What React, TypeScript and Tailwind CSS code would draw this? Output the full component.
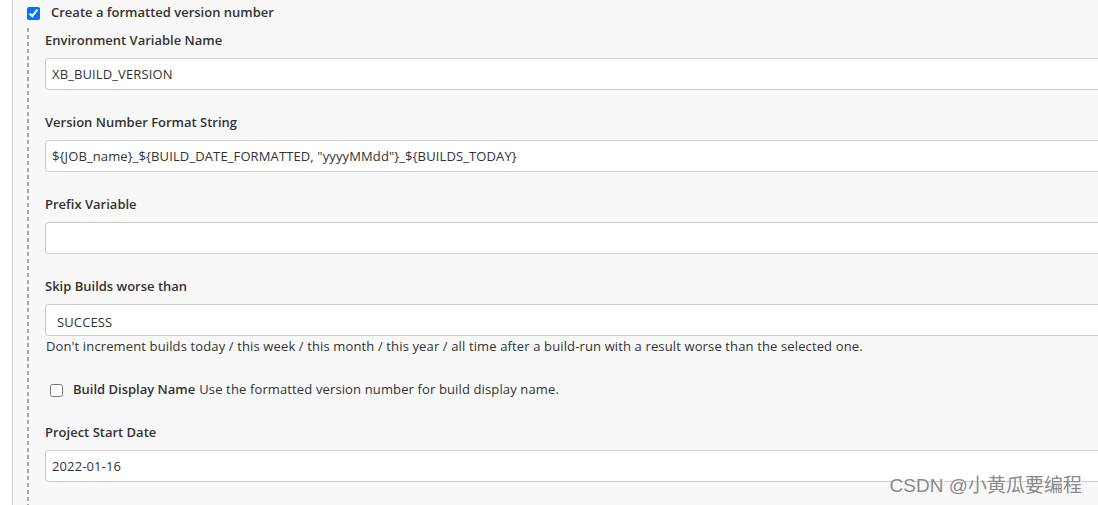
import React from 'react';

function Field({ label, value, className = '' }: { label: string; value: string; className?: string }) {
  return (
    <div className={className}>
      <div className="h-[20px] leading-[20px] font-semibold text-[#333]">{label}</div>
      <div className="mt-[8px] flex h-[32px] w-[1100px] items-center rounded-[3px] border border-[#ccc] bg-white pl-[6px] pt-[1px] tracking-[0.12px] text-[#333]">
        {value}
      </div>
    </div>
  );
}

export default function App() {
  return (
    <div className="relative flex h-[505px] w-[1098px] overflow-hidden bg-white font-['Open_Sans',sans-serif] text-[13px] text-[#333]">
      <div className="w-[12px] shrink-0 bg-white" />
      <div className="flex-1 border-l border-[#d0d0d0] bg-[#f8f8f8]">
        {/* top checkbox */}
        <div className="flex h-[26px] items-center pl-[14px]">
          <input type="checkbox" checked readOnly className="m-0 h-[13px] w-[13px] accent-[#0075ff]" />
          <span className="ml-[11px] font-semibold">Create a formatted version number</span>
        </div>

        <div className="mt-[2px] flex">
          <div className="ml-[14px] h-[480px] w-[2px] shrink-0 bg-[repeating-linear-gradient(to_bottom,#a8a8a8_0_4px,transparent_4px_7px)]" />
          <div className="ml-[16px] pt-[2px]">
            <Field label="Environment Variable Name" value="XB_BUILD_VERSION" />
            <Field className="mt-[22px]" label="Version Number Format String" value={'${JOB_name}_${BUILD_DATE_FORMATTED, "yyyyMMdd"}_${BUILDS_TODAY}'} />
            <Field className="mt-[22px]" label="Prefix Variable" value="" />

            <div className="mt-[22px]">
              <div className="h-[20px] leading-[20px] font-semibold">Skip Builds worse than</div>
              <div className="mt-[8px] flex h-[32px] w-[1100px] items-center rounded-[3px] border border-[#ccc] bg-white pl-[11px] pt-[5px] tracking-[0.12px]">
                SUCCESS
              </div>
              <div className="h-[20px] pl-[1px] leading-[20px] tracking-[0.13px]">
                Don't increment builds today / this week / this month / this year / all time after a build-run with a result worse than the selected one.
              </div>
            </div>

            <div className="mt-[24px] flex h-[20px] items-center pl-[5px]">
              <input type="checkbox" readOnly className="m-0 h-[13px] w-[13px]" />
              <span className="ml-[10px] font-semibold">Build Display Name</span>
              <span className="ml-[4px] tracking-[0.13px]">Use the formatted version number for build display name.</span>
            </div>

            <Field className="mt-[22px]" label="Project Start Date" value="2022-01-16" />
          </div>
        </div>
      </div>

      <div className="absolute bottom-[5px] right-[16px] font-['Liberation_Sans','Noto_Sans_CJK_SC',sans-serif] text-[19px] text-[#8a8a8a] [text-shadow:1px_1px_0_#fff]">
        CSDN @小黄瓜要编程
      </div>
    </div>
  );
}
